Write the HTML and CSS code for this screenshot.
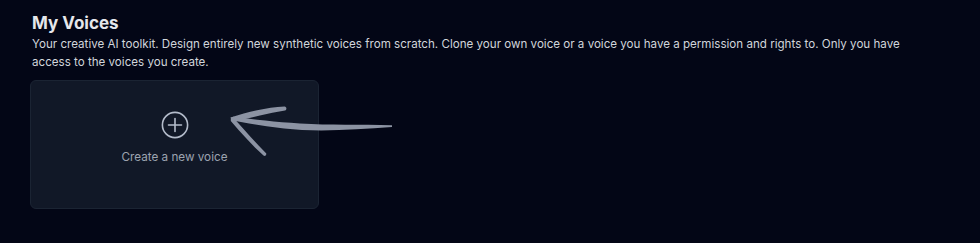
FILE: index.html
```html
<!DOCTYPE html>
<html>
<head>
<meta charset="utf-8">
<link rel="stylesheet" href="styles.css">
</head>
<body>
<main class="page">
  <h1 class="title">My Voices</h1>
  <p class="desc">Your creative AI toolkit. Design entirely new synthetic voices from scratch. Clone your own voice or a voice you have a permission and rights to. Only you have access to the voices you create.</p>
  <div class="grid">
    <div class="card">
      <svg class="plus" width="28" height="28" viewBox="0 0 28 28" fill="none" stroke="#b4bccb" stroke-width="1.6" stroke-linecap="round">
        <circle cx="14" cy="14" r="12.6"/>
        <path d="M14 7.5v13M7.5 14h13"/>
      </svg>
      <span class="label">Create a new voice</span>
    </div>
  </div>
  <svg class="arrow" width="170" height="60" viewBox="222 100 170 60">
    <path fill="#8c93a3" d="M392.5 125.2 C360 124.5 330 125.2 300 123.5 C275 122 255 119.5 233 116.8 L231.5 120.2 C255 124.5 278 128.5 302 130 C332 131.5 362 129 392.5 127 Z"/>
    <path fill="#8c93a3" d="M230.5 117.6 C248 112 266 107.5 284.5 106.6 C287 107 287 110 285 110.6 C268 113.5 252 117.5 234.5 121.5 Z"/>
    <path fill="#8c93a3" d="M230.8 117.2 L235 119.5 C246 132 256 143 266.3 153.5 C266.5 155.5 265 156.5 263.5 155.6 C252 145 241 133 230.8 121 Z"/>
  </svg>
</main>
</body>
</html>
```
FILE: styles.css
```css
html, body {
  margin: 0;
  padding: 0;
  background: #030616;
}
body {
  font-family: Inter, "Noto Sans", "Liberation Sans", sans-serif;
  color: #e5e7eb;
}
.page {
  position: relative;
  padding: 12px 30px 0 32px;
  height: 243px;
  box-sizing: border-box;
}
.title {
  margin: 0;
  font-size: 17px;
  line-height: 22px;
  font-weight: 700;
  color: #e5e7eb;
}
.desc {
  margin: 1px 0 0;
  font-size: 11.6px;
  line-height: 18px;
  color: #d1d5db;
  max-width: 880px;
}
.grid {
  margin: 9px 0 0 -2px;
  display: flex;
}
.card {
  width: 287px;
  background: #111827;
  border: 1px solid #1b2433;
  border-radius: 6px;
  display: flex;
  flex-direction: column;
  align-items: center;
  padding-top: 30px;
  box-sizing: content-box;
  height: 97px;
}
.plus {
  display: block;
}
.label {
  margin-top: 10px;
  font-size: 11.7px;
  line-height: 16px;
  color: #9ca3af;
}
.arrow {
  position: absolute;
  left: 222px;
  top: 100px;
}
```
